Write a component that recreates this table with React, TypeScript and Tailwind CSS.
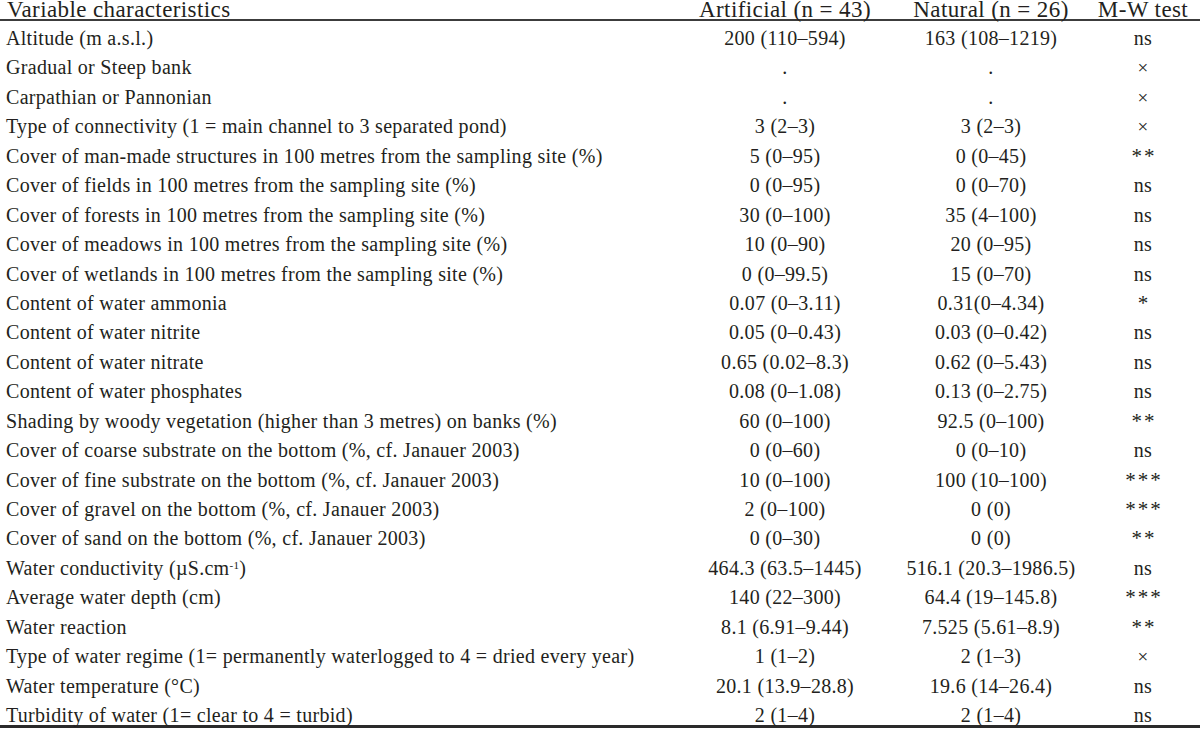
const rows: [React.ReactNode, string, string, string][] = [
  ["Altitude (m a.s.l.)", "200 (110–594)", "163 (108–1219)", "ns"],
  ["Gradual or Steep bank", ".", ".", "×"],
  ["Carpathian or Pannonian", ".", ".", "×"],
  ["Type of connectivity (1 = main channel to 3 separated pond)", "3 (2–3)", "3 (2–3)", "×"],
  ["Cover of man-made structures in 100 metres from the sampling site (%)", "5 (0–95)", "0 (0–45)", "**"],
  ["Cover of fields in 100 metres from the sampling site (%)", "0 (0–95)", "0 (0–70)", "ns"],
  ["Cover of forests in 100 metres from the sampling site (%)", "30 (0–100)", "35 (4–100)", "ns"],
  ["Cover of meadows in 100 metres from the sampling site (%)", "10 (0–90)", "20 (0–95)", "ns"],
  ["Cover of wetlands in 100 metres from the sampling site (%)", "0 (0–99.5)", "15 (0–70)", "ns"],
  ["Content of water ammonia", "0.07 (0–3.11)", "0.31(0–4.34)", "*"],
  ["Content of water nitrite", "0.05 (0–0.43)", "0.03 (0–0.42)", "ns"],
  ["Content of water nitrate", "0.65 (0.02–8.3)", "0.62 (0–5.43)", "ns"],
  ["Content of water phosphates", "0.08 (0–1.08)", "0.13 (0–2.75)", "ns"],
  ["Shading by woody vegetation (higher than 3 metres) on banks (%)", "60 (0–100)", "92.5 (0–100)", "**"],
  ["Cover of coarse substrate on the bottom (%, cf. Janauer 2003)", "0 (0–60)", "0 (0–10)", "ns"],
  ["Cover of fine substrate on the bottom (%, cf. Janauer 2003)", "10 (0–100)", "100 (10–100)", "***"],
  ["Cover of gravel on the bottom (%, cf. Janauer 2003)", "2 (0–100)", "0 (0)", "***"],
  ["Cover of sand on the bottom (%, cf. Janauer 2003)", "0 (0–30)", "0 (0)", "**"],
  [
    <>
      Water conductivity (µS.cm<sup className="text-[11px]">-1</sup>)
    </>,
    "464.3 (63.5–1445)",
    "516.1 (20.3–1986.5)",
    "ns",
  ],
  ["Average water depth (cm)", "140 (22–300)", "64.4 (19–145.8)", "***"],
  ["Water reaction", "8.1 (6.91–9.44)", "7.525 (5.61–8.9)", "**"],
  ["Type of water regime (1= permanently waterlogged to 4 = dried every year)", "1 (1–2)", "2 (1–3)", "×"],
  ["Water temperature (°C)", "20.1 (13.9–28.8)", "19.6 (14–26.4)", "ns"],
  ["Turbidity of water (1= clear to 4 = turbid)", "2 (1–4)", "2 (1–4)", "ns"],
];

function TestMark({ v }: { v: string }) {
  if (v.startsWith("*")) {
    return <span className="text-[21px] tracking-[2px] pl-[2px]">{v}</span>;
  }
  if (v === "×") {
    return <span className="text-[19px]">×</span>;
  }
  return <span>{v}</span>;
}

export default function App() {
  return (
    <div className="w-[1200px] h-[731px] overflow-hidden bg-white text-[#231f20] font-['Liberation_Serif',serif]">
      <div className="grid grid-cols-[678px_214px_198px_106px_4px] h-[21px] leading-[19px] text-[23px] border-b-2 border-[#3c3c3c] tracking-[0.4px] whitespace-nowrap">
        <div className="pl-[7px]">Variable characteristics</div>
        <div className="text-center">Artificial (n = 43)</div>
        <div className="text-center">Natural (n = 26)</div>
        <div className="text-center">M-W test</div>
        <div />
      </div>
      <div className="h-[704px] text-[20px] tracking-[0.3px]">
        {rows.map((r, i) => (
          <div
            key={i}
            className="grid grid-cols-[678px_214px_198px_106px_4px] h-[29.45px] leading-[29.45px] pt-[3px] whitespace-nowrap"
          >
            <div className="pl-[6px]">{r[0]}</div>
            <div className="text-center">{r[1]}</div>
            <div className="text-center">{r[2]}</div>
            <div className="text-center">
              <TestMark v={r[3]} />
            </div>
            <div />
          </div>
        ))}
      </div>
      <div className="border-t-[3px] border-[#2a2a2a]" />
    </div>
  );
}
